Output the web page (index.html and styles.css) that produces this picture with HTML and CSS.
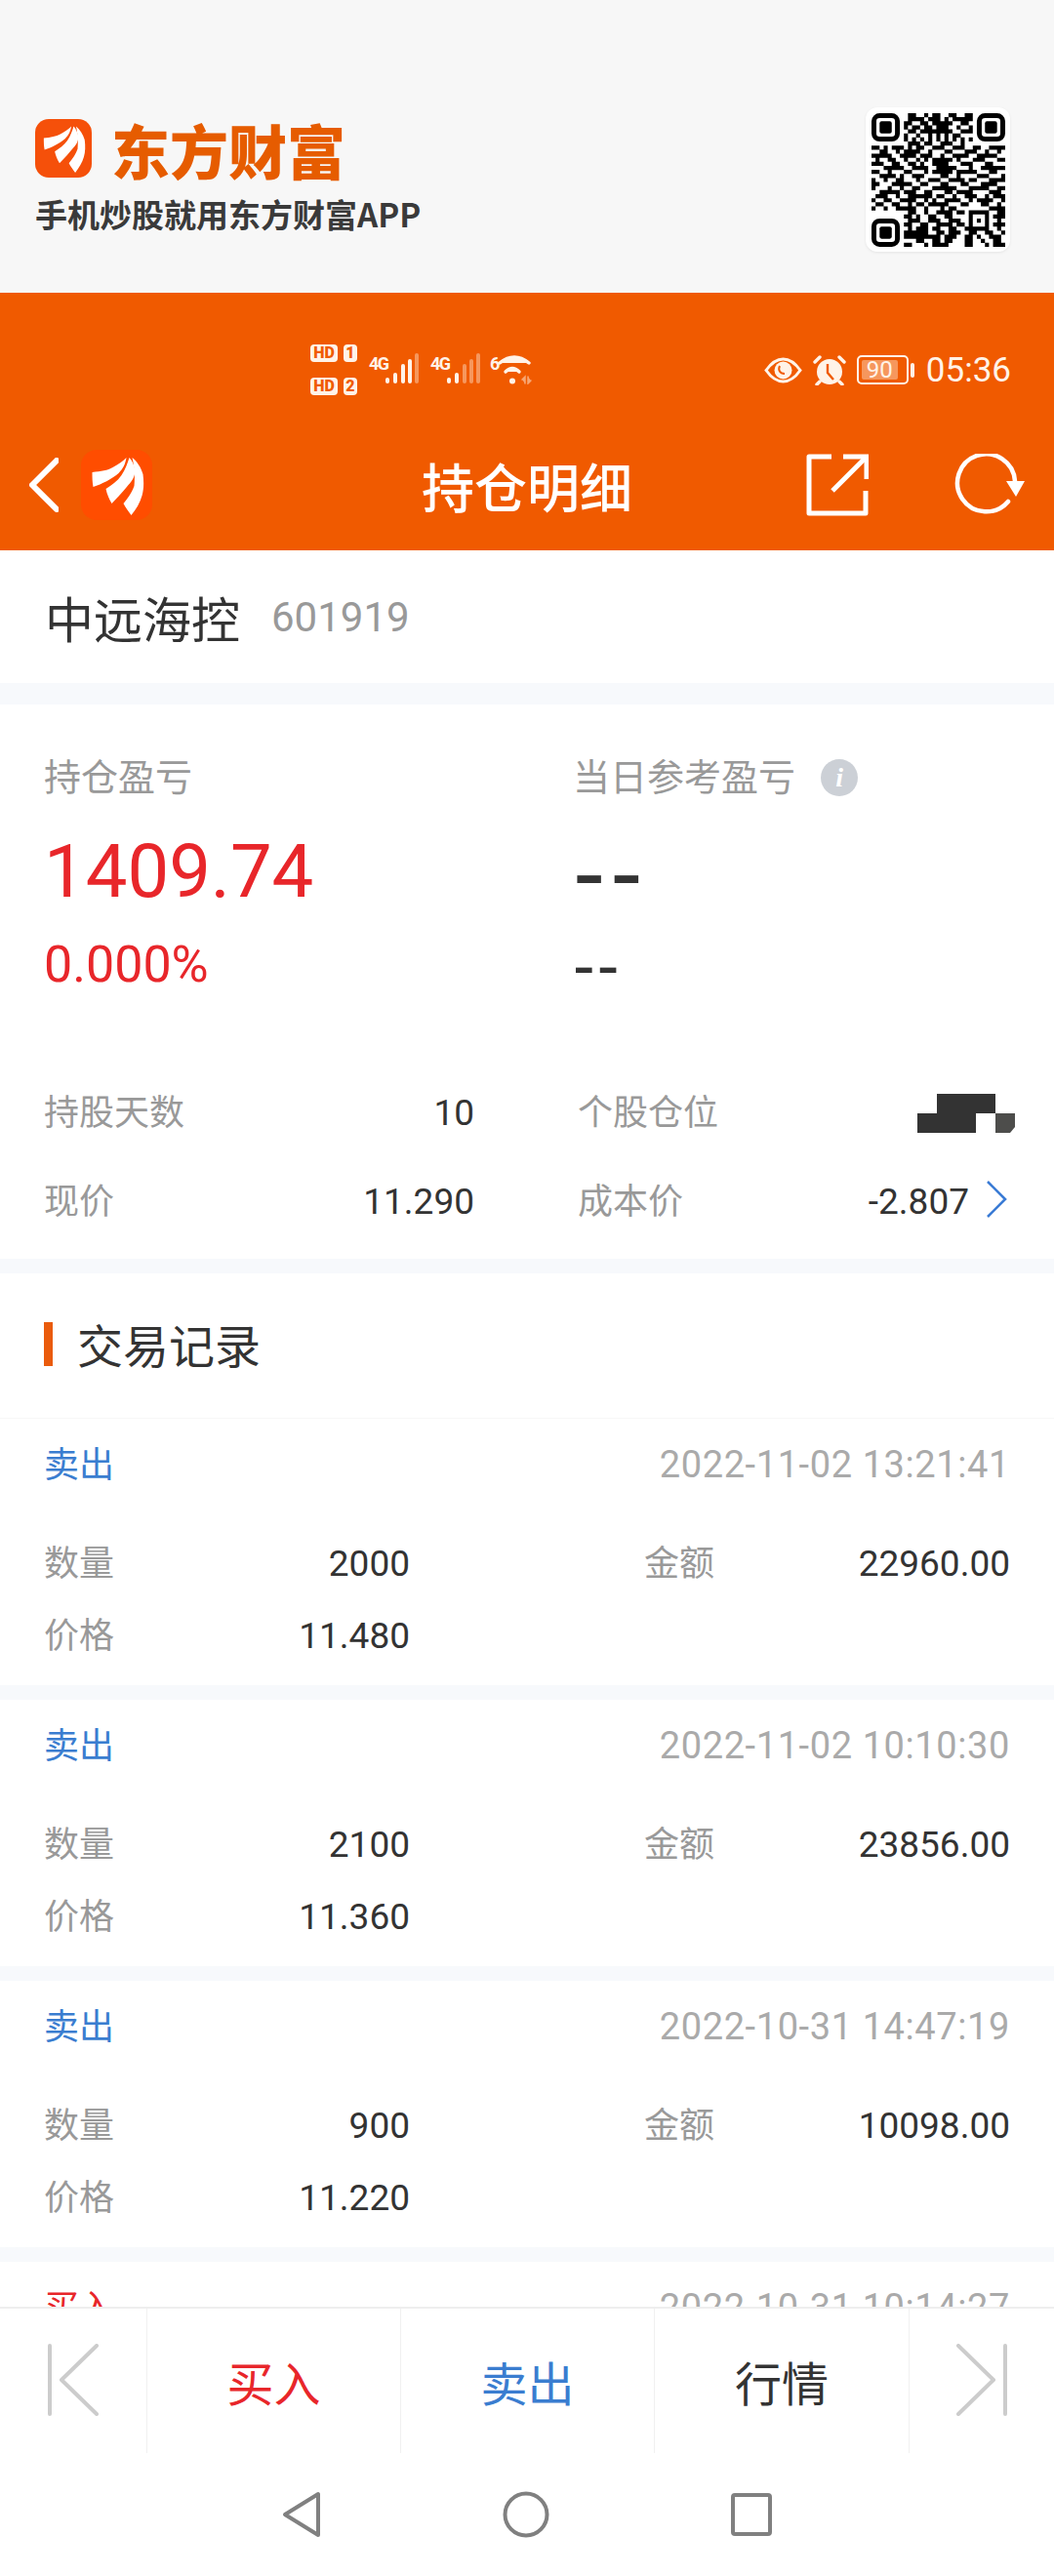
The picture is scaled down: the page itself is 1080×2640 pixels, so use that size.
FILE: index.html
```html
<!DOCTYPE html>
<html lang="zh-CN">

<head>
    <meta charset="UTF-8" />
    <title>持仓明细</title>
    <link rel="stylesheet" href="styles.css">
</head>

<body>
    <svg class="defs" width="0" height="0">
        <symbol id="feathers" viewBox="0 0 72 72">
            <path d="M11 23C20 22 27 21 32 18C38 15 43 11 46 8C45 14 43 19 38 24C31 30 21 35 12 38C11 33 11 28 11 23Z" />
            <path d="M25 40C31 36 37 32 41 26C45 20 47 14 49 8C52 11 54 16 55 21C55 27 52 32 48 36C43 42 37 49 31 55C28 50 26 45 25 40Z" />
            <path d="M43 55C48 49 52 43 54 37C55 27 54 16 52 8C57 12 61 18 63 25C64 33 64 40 62 47C60 54 56 61 51 67C48 63 45 59 43 55Z" />
        </symbol>
    </svg>

    <div id="page">
        <header class="promo">
            <div class="promo-brand">
                <div class="promo-name">
                    <svg class="logo logo-big"><use href="#feathers" /></svg>
                    <span class="promo-title">东方财富</span>
                </div>
                <div class="promo-sub">手机炒股就用东方财富APP</div>
            </div>
            <div class="qr">
                <svg width="137" height="137" viewBox="0 0 33 33">
                    <g fill="none" stroke="#000">
                        <rect x=".6" y=".6" width="5.8" height="5.8" rx="1.4" stroke-width="1.2" />
                        <rect x="26.6" y=".6" width="5.8" height="5.8" rx="1.4" stroke-width="1.2" />
                        <rect x=".6" y="26.6" width="5.8" height="5.8" rx="1.4" stroke-width="1.2" />
                    </g>
                    <rect x="2" y="2" width="3" height="3" rx=".5" />
                    <rect x="28" y="2" width="3" height="3" rx=".5" />
                    <rect x="2" y="28" width="3" height="3" rx=".5" />
                    <path fill="none" stroke="#000" stroke-width="1.02" d="
                        M9 .5h2M13 .5h1M15 .5h2M19 .5h2M23 .5h2
                        M9 1.5h4M14 1.5h3M18 1.5h1M20 1.5h5
                        M8 2.5h2M12 2.5h2M15 2.5h5M22 2.5h2
                        M8 3.5h1M10 3.5h2M13 3.5h2M16 3.5h3M21 3.5h1M24 3.5h1
                        M9 4.5h2M12 4.5h8M22 4.5h3
                        M8 5.5h1M11 5.5h1M14 5.5h1M16 5.5h1M18 5.5h1M20 5.5h2
                        M8 6.5h1M10 6.5h1M12 6.5h1M14 6.5h1M16 6.5h1M18 6.5h1M20 6.5h1M22 6.5h1M24 6.5h1
                        M9 7.5h3M13 7.5h2M17 7.5h3M22 7.5h1
                        M0 8.5h2M3 8.5h1M5 8.5h3M9 8.5h1M11 8.5h2M15 8.5h3M20 8.5h3M25 8.5h2M29 8.5h4
                        M2 9.5h2M6 9.5h1M8 9.5h4M14 9.5h1M18 9.5h2M23 9.5h3M28 9.5h1M31 9.5h1
                        M0 10.5h5M7 10.5h4M12 10.5h3M17 10.5h1M20 10.5h4M26 10.5h5
                        M1 11.5h1M4 11.5h2M8 11.5h1M11 11.5h1M13 11.5h1M15 11.5h5M21 11.5h1M25 11.5h3M31 11.5h2
                        M0 12.5h3M5 12.5h2M9 12.5h2M12 12.5h1M15 12.5h4M22 12.5h3M28 12.5h2
                        M3 13.5h5M10 13.5h4M16 13.5h5M24 13.5h1M27 13.5h6
                        M0 14.5h2M4 14.5h1M8 14.5h2M13 14.5h1M15 14.5h5M21 14.5h5M29 14.5h2
                        M2 15.5h4M7 15.5h1M10 15.5h3M17 15.5h2M21 15.5h1M26 15.5h3M32 15.5h1
                        M0 16.5h1M3 16.5h1M6 16.5h2M11 16.5h1M14 16.5h3M19 16.5h4M24 16.5h2M29 16.5h4
                        M0 17.5h2M5 17.5h5M12 17.5h2M17 17.5h2M22 17.5h2M27 17.5h4
                        M0 18.5h1M4 18.5h1M7 18.5h1M10 18.5h2M15 18.5h6M24 18.5h5M31 18.5h2
                        M2 19.5h5M8 19.5h3M13 19.5h2M18 19.5h2M21 19.5h4M29 19.5h3
                        M1 20.5h3M6 20.5h1M9 20.5h6M16 20.5h2M20 20.5h1M23 20.5h3M28 20.5h1M30 20.5h3
                        M0 21.5h1M3 21.5h2M7 21.5h4M13 21.5h1M15 21.5h1M18 21.5h4M24 21.5h1M26 21.5h4M32 21.5h1
                        M1 22.5h2M5 22.5h2M9 22.5h1M11 22.5h2M14 22.5h5M22 22.5h2M27 22.5h2M31 22.5h1
                        M0 23.5h1M3 23.5h1M6 23.5h5M13 23.5h1M17 23.5h1M19 23.5h2M29 23.5h4
                        M9 24.5h2M13 24.5h1M16 24.5h4M21 24.5h2M24 24.5h5M31 24.5h2
                        M8 25.5h2M11 25.5h1M14 25.5h2M18 25.5h2M24 25.5h1M28 25.5h1M30 25.5h3
                        M9 26.5h3M14 26.5h3M19 26.5h3M24 26.5h1M26 26.5h1M28 26.5h1M31 26.5h1
                        M8 27.5h2M12 27.5h2M16 27.5h4M21 27.5h2M24 27.5h1M28 27.5h1M30 27.5h3
                        M9 28.5h1M11 28.5h3M15 28.5h2M19 28.5h2M23 28.5h1M24 28.5h5M31 28.5h1
                        M8 29.5h6M16 29.5h2M19 29.5h3M24 29.5h2M28 29.5h2M32 29.5h1
                        M8 30.5h9M18 30.5h3M23 30.5h2M26 30.5h1M29 30.5h3
                        M11 31.5h2M15 31.5h2M18 31.5h2M23 31.5h2M27 31.5h1M30 31.5h2
                        M8 32.5h2M13 32.5h1M15 32.5h4M23 32.5h2M28 32.5h1M30 32.5h3" />
                </svg>
            </div>
        </header>

        <section class="appbar">
            <div class="status">
                <div class="hd-stack">
                    <div class="hd"><b>HD</b><i>1</i></div>
                    <div class="hd"><b>HD</b><i>2</i></div>
                </div>
                <div class="sig">
                    <span>4G</span>
                    <svg width="34" height="32" viewBox="0 0 34 32">
                        <rect x="0" y="25" width="4" height="6" rx="2" />
                        <rect x="8" y="20" width="4" height="11" rx="2" />
                        <rect x="16" y="11" width="4" height="20" rx="2" />
                        <rect x="23" y="6" width="4" height="25" rx="2" />
                        <rect class="dim" x="30" y="0" width="4" height="31" rx="2" />
                    </svg>
                </div>
                <div class="sig">
                    <span>4G</span>
                    <svg width="34" height="32" viewBox="0 0 34 32">
                        <rect x="0" y="25" width="4" height="6" rx="2" />
                        <rect x="8" y="20" width="4" height="11" rx="2" />
                        <rect class="dim" x="16" y="11" width="4" height="20" rx="2" />
                        <rect class="dim" x="23" y="6" width="4" height="25" rx="2" />
                        <rect class="dim" x="30" y="0" width="4" height="31" rx="2" />
                    </svg>
                </div>
                <div class="sig wifi">
                    <span>6</span>
                    <svg width="36" height="32" viewBox="0 0 36 32" fill="none" stroke="#fff3e8" stroke-width="3.4" stroke-linecap="round">
                        <path d="M2 10Q17 -2 32 10" />
                        <path d="M8 19Q15 12 22 19" />
                        <circle cx="15" cy="28.500" r="3" fill="#fff3e8" stroke="none" />
                        <path class="dim-arrows" d="M25 27l3-3v7M34 28l-3 3v-7" stroke-width="1.5" />
                    </svg>
                </div>
                <div class="status-right">
                    <svg width="39" height="27" viewBox="0 0 39 27" fill="none" stroke="#fff3e8">
                        <path stroke-width="3" d="M2 13.5C8 5 14 2 19.5 2S31 5 37 13.5C31 22 25 25 19.5 25S8 22 2 13.5Z" />
                        <circle cx="19.5" cy="13.5" r="9" fill="#fff3e8" stroke="none" />
                        <path stroke="#f05a00" stroke-width="2" d="M16 9C14 13 16 17 21 17" />
                    </svg>
                    <svg width="34" height="31" viewBox="0 0 34 31">
                        <circle cx="17" cy="17" r="13" fill="#fff3e8" />
                        <path fill="none" stroke="#f05a00" stroke-width="2.4" d="M15 9v9l6 7" />
                        <path fill="none" stroke="#fff3e8" stroke-width="3.4" stroke-linecap="round" d="M2 7L7 2M32 7L27 2M7 27L4 30M27 27L30 30" />
                    </svg>
                    <div class="battery">
                        <div class="battery-level">90</div>
                    </div>
                    <div class="battery-nub"></div>
                    <span class="clock">05:36</span>
                </div>
            </div>
            <nav class="navrow">
                <svg class="back" width="30" height="56" viewBox="0 0 30 56">
                    <path d="M28 3L3 28L28 53" />
                </svg>
                <svg class="logo logo-small"><use href="#feathers" /></svg>
                <h1 class="nav-title">持仓明细</h1>
                <svg class="share" width="64" height="64" viewBox="0 0 64 64" fill="none" stroke="#fff" stroke-width="5">
                    <path stroke-linejoin="round" d="M26 3H3V61H61V38" />
                    <path d="M27 38L60 5" />
                    <path d="M38 3H62V26" />
                </svg>
                <svg class="refresh" width="72" height="64" viewBox="0 0 72 64" fill="none" stroke="#fff" stroke-width="4.5">
                    <path stroke-linecap="round" d="M55 49A29.500 29.500 0 1 1 62 28" />
                    <path d="M53 28H72L63 44Z" fill="#fff" stroke="none" />
                </svg>
            </nav>
        </section>

        <div class="content">
            <div class="stock">
                <span class="stock-name">中远海控</span>
                <span class="stock-code">601919</span>
            </div>

            <section class="summary">
                <div class="pnl-cols">
                    <div class="pnl">
                        <div class="label">持仓盈亏</div>
                        <div class="pnl-big red">1409.74</div>
                        <div class="pnl-pct red">0.000%</div>
                    </div>
                    <div class="pnl">
                        <div class="label label-info">当日参考盈亏 <span class="info">i</span></div>
                        <div class="pnl-big dash">--</div>
                        <div class="pnl-pct dash-small">--</div>
                    </div>
                </div>
                <div class="stats">
                    <div class="stat">
                        <span class="label-sm">持股天数</span>
                        <span class="val">10</span>
                    </div>
                    <div class="stat stat-right">
                        <span class="label-sm">个股仓位</span>
                        <svg class="mask" width="100" height="40" viewBox="0 0 100 40">
                            <path fill="#333" d="M20 0H80V20H60V40H0V20H20Z" />
                            <path fill="#4d4d4b" d="M80 20H100V34L95 40H80Z" />
                        </svg>
                    </div>
                    <div class="stat">
                        <span class="label-sm">现价</span>
                        <span class="val">11.290</span>
                    </div>
                    <div class="stat stat-right stat-more">
                        <span class="label-sm">成本价</span>
                        <span class="val">-2.807</span>
                        <svg class="more" width="22" height="38" viewBox="0 0 22 38">
                            <path d="M2 1L20 19L2 37" />
                        </svg>
                    </div>
                </div>
            </section>

            <section class="records">
                <h2 class="records-title">交易记录</h2>

                <div class="record">
                    <div class="record-head">
                        <span class="sell">卖出</span>
                        <span class="date">2022-11-02 13:21:41</span>
                    </div>
                    <div class="record-grid">
                        <div class="cell"><span class="label-sm">数量</span><span class="val">2000</span></div>
                        <div class="cell"><span class="label-sm">金额</span><span class="val">22960.00</span></div>
                        <div class="cell"><span class="label-sm">价格</span><span class="val">11.480</span></div>
                    </div>
                </div>

                <div class="record">
                    <div class="record-head">
                        <span class="sell">卖出</span>
                        <span class="date">2022-11-02 10:10:30</span>
                    </div>
                    <div class="record-grid">
                        <div class="cell"><span class="label-sm">数量</span><span class="val">2100</span></div>
                        <div class="cell"><span class="label-sm">金额</span><span class="val">23856.00</span></div>
                        <div class="cell"><span class="label-sm">价格</span><span class="val">11.360</span></div>
                    </div>
                </div>

                <div class="record">
                    <div class="record-head">
                        <span class="sell">卖出</span>
                        <span class="date">2022-10-31 14:47:19</span>
                    </div>
                    <div class="record-grid">
                        <div class="cell"><span class="label-sm">数量</span><span class="val">900</span></div>
                        <div class="cell"><span class="label-sm">金额</span><span class="val">10098.00</span></div>
                        <div class="cell"><span class="label-sm">价格</span><span class="val">11.220</span></div>
                    </div>
                </div>

                <div class="record">
                    <div class="record-head">
                        <span class="buy">买入</span>
                        <span class="date">2022-10-31 10:14:27</span>
                    </div>
                </div>
            </section>
        </div>

        <div class="tabs">
            <div class="tab">
                <svg width="52" height="74" viewBox="0 0 52 74"><path d="M2 2V72M50 2L14 37L50 72" /></svg>
            </div>
            <div class="tab red">买入</div>
            <div class="tab blue">卖出</div>
            <div class="tab">行情</div>
            <div class="tab">
                <svg width="52" height="74" viewBox="0 0 52 74"><path d="M50 2V72M2 2L38 37L2 72" /></svg>
            </div>
        </div>

        <div class="sysnav">
            <svg width="40" height="48" viewBox="0 0 40 48"><path d="M37 3V45L3 24Z" /></svg>
            <svg width="48" height="48" viewBox="0 0 48 48"><circle cx="24" cy="24" r="21.5" /></svg>
            <svg width="42" height="44" viewBox="0 0 42 44"><rect x="2" y="2" width="38" height="40" rx="2" /></svg>
        </div>
    </div>
</body>

</html>
```

FILE: styles.css
```css
* {
    box-sizing: border-box;
}

body {
    margin: 0;
    background: #fff;
    color: #333;
    font-family: Roboto, "Noto Sans CJK SC", sans-serif;
}

.defs {
    position: absolute;
}

#page {
    width: 1080px;
    height: 2640px;
    display: flex;
    flex-direction: column;
    overflow: hidden;
}

/* Top promo strip */
.promo {
    height: 300px;
    background: #f7f7f7;
    display: flex;
    justify-content: space-between;
    padding: 110px 45px 0 36px;
}

.promo-name {
    display: flex;
    align-items: center;
    height: 68px;
    margin-top: 8px;
}

.logo {
    fill: #fff;
    background: #f5500a;
    flex: none;
}

.logo-big {
    width: 58px;
    height: 60px;
    border-radius: 14px;
}

.promo-title {
    margin-left: 20px;
    font-size: 60px;
    font-weight: 900;
    color: #e65c00;
    font-family: "Noto Sans CJK SC", sans-serif;
}

.promo-sub {
    margin-top: 13px;
    font-size: 33px;
    font-weight: 700;
    line-height: 40px;
    color: #3a3a3a;
    font-family: "Noto Sans CJK SC", sans-serif;
}

.qr {
    width: 148px;
    height: 148px;
    padding: 6px;
    background: #fff;
    border-radius: 12px;
    box-shadow: 0 1px 3px rgba(0, 0, 0, 0.08);
}

.qr svg {
    display: block;
}

/* Orange app bar */
.appbar {
    height: 264px;
    background: #f05a00;
    color: #fff;
}

.status {
    height: 130px;
    padding: 53px 44px 25px 318px;
    display: flex;
    color: #fff3e8;
}

.hd-stack {
    display: flex;
    flex-direction: column;
    justify-content: space-between;
    height: 52px;
}

.hd {
    display: flex;
    gap: 6px;
    height: 18px;
}

.hd b,
.hd i {
    background: #fff3e8;
    color: #f05a00;
    font-size: 16px;
    font-weight: 900;
    font-style: normal;
    line-height: 18px;
    text-align: center;
    border-radius: 4px;
}

.hd b {
    width: 28px;
}

.hd i {
    width: 14px;
}

.sig {
    display: flex;
    margin-left: 12px;
    height: 32px;
    margin-top: 9px;
}

.sig span {
    font-size: 18px;
    font-weight: 700;
    letter-spacing: -1.5px;
    line-height: 20px;
    width: 17px;
    margin-top: 1px;
}

.sig svg {
    fill: #fff3e8;
    flex: none;
}

.sig .dim {
    opacity: 0.4;
}

.wifi {
    margin-left: 10px;
}

.wifi span {
    width: 8px;
    letter-spacing: 0;
}

.wifi .dim-arrows {
    opacity: 0.5;
}

.status-right {
    margin-left: auto;
    display: flex;
    align-items: center;
    height: 52px;
}

.status-right svg {
    margin-right: 11px;
}

.battery {
    width: 53px;
    height: 30px;
    border: 2px solid #fff3e8;
    border-radius: 5px;
    padding: 3px;
}

.battery-level {
    width: 37px;
    height: 20px;
    background: rgba(255, 243, 232, 0.4);
    border-radius: 2px;
    font-size: 24px;
    line-height: 20px;
    text-align: center;
    color: #fff3e8;
}

.battery-nub {
    width: 4px;
    height: 15px;
    margin-left: 2px;
    background: #fff3e8;
    border-radius: 2px;
}

.clock {
    margin-left: 12px;
    font-size: 35px;
    color: #fff3e8;
}

.navrow {
    height: 134px;
    padding: 0 30px;
    display: flex;
    align-items: center;
    position: relative;
}

.back {
    flex: none;
    fill: none;
    stroke: #fff;
    stroke-width: 6;
    stroke-linecap: round;
    stroke-linejoin: round;
}

.logo-small {
    width: 73px;
    height: 72px;
    margin-left: 23px;
    border-radius: 16px;
    background: #ff4d00;
}

.nav-title {
    position: absolute;
    left: 0;
    right: 0;
    margin: 0;
    text-align: center;
    font-size: 54px;
    font-weight: 500;
    font-family: "Noto Sans CJK SC", sans-serif;
}

.share {
    margin-left: auto;
    margin-right: 88px;
}

/* Scrolling content */
.content {
    flex: 1;
    min-height: 0;
    overflow: hidden;
}

.stock {
    height: 136px;
    padding: 0 46px;
    display: flex;
    align-items: center;
    gap: 32px;
}

.stock-name {
    font-size: 50px;
    color: #333;
    font-family: "Noto Sans CJK SC", sans-serif;
}

.stock-code {
    font-size: 42px;
    color: #999;
}

.summary {
    border-top: 22px solid #f7f9fc;
    border-bottom: 15px solid #f7f9fc;
    height: 605px;
    padding: 52px 45px 0;
}

.pnl-cols {
    display: flex;
    height: 344px;
}

.pnl {
    flex: none;
    width: 542px;
}

.label {
    font-size: 38px;
    line-height: 46px;
    color: #999;
    display: flex;
    align-items: center;
}

.info {
    width: 38px;
    height: 38px;
    margin-left: 26px;
    border-radius: 50%;
    background: #ccd0d6;
    color: #fff;
    font: italic 700 28px/38px "Liberation Serif", serif;
    text-align: center;
}

.pnl-big {
    margin-top: 28px;
    font-size: 76px;
    line-height: 90px;
}

.pnl-pct {
    margin-top: 21px;
    font-size: 52px;
    line-height: 60px;
}

.red {
    color: #e8262a;
}

.blue {
    color: #3a7dd0;
}

.dash {
    font-family: "Liberation Sans", sans-serif;
    font-size: 100px;
    letter-spacing: 5px;
    color: #333;
}

.dash-small {
    font-family: "Liberation Sans", sans-serif;
    font-size: 68px;
    letter-spacing: 2px;
    color: #333;
}

.stats {
    display: grid;
    grid-template-columns: 441px 448px;
    column-gap: 106px;
    row-gap: 45px;
}

.stat {
    display: flex;
    justify-content: space-between;
    align-items: center;
    height: 46px;
}

.label-sm {
    font-size: 36px;
    line-height: 46px;
    color: #999;
}

.val {
    font-size: 37px;
    line-height: 46px;
    color: #333;
}

.stat-more .val {
    margin-left: auto;
    margin-right: 17px;
}

.more {
    flex: none;
    margin: 0 8px 6px 0;
    fill: none;
    stroke: #3a7bd5;
    stroke-width: 2.6;
}

/* Trade records */
.records-title {
    margin: 0;
    height: 149px;
    padding: 0 0 6px 79px;
    display: flex;
    align-items: center;
    font-size: 47px;
    font-weight: 400;
    color: #333;
    font-family: "Noto Sans CJK SC", sans-serif;
    position: relative;
    border-bottom: 1px solid #f7f7f7;
}

.records-title::before {
    content: "";
    position: absolute;
    left: 45px;
    top: 50px;
    width: 9px;
    height: 45px;
    background: #ea5b0c;
}

.record {
    height: 288px;
    padding: 24px 45px 0;
    border-bottom: 15px solid #f7f9fc;
}

.record-head {
    display: flex;
    justify-content: space-between;
    align-items: center;
    height: 46px;
}

.sell,
.buy {
    margin-top: -6px;
    font-size: 36px;
}

.sell {
    color: #3a7dd0;
}

.buy {
    color: #e8262a;
}

.date {
    font-size: 38px;
    letter-spacing: 0.6px;
    color: #aaa;
}

.record-grid {
    display: grid;
    grid-template-columns: 375px 375px;
    column-gap: 240px;
    row-gap: 28px;
    margin-top: 56px;
}

.cell {
    display: flex;
    justify-content: space-between;
}

/* Bottom actions */
.tabs {
    flex: none;
    height: 150px;
    border-top: 2px solid #eee;
    background: #fff;
    display: grid;
    grid-template-columns: 150px 260px 260px 261px 149px;
}

.tab {
    display: flex;
    align-items: center;
    justify-content: center;
    font-size: 48px;
    border-left: 1px solid #f0f0f0;
    font-family: "Noto Sans CJK SC", sans-serif;
}

.tab:first-child {
    border-left: 0;
}

.tab svg {
    margin-top: -2px;
    fill: none;
    stroke: #ccc;
    stroke-width: 4;
    stroke-linecap: round;
    stroke-linejoin: round;
}

.sysnav {
    flex: none;
    height: 126px;
    padding-left: 289px;
    background: #fff;
    display: flex;
    align-items: center;
    gap: 186px;
}

.sysnav svg {
    fill: none;
    stroke: #808080;
    stroke-width: 4;
    stroke-linejoin: round;
}
```
